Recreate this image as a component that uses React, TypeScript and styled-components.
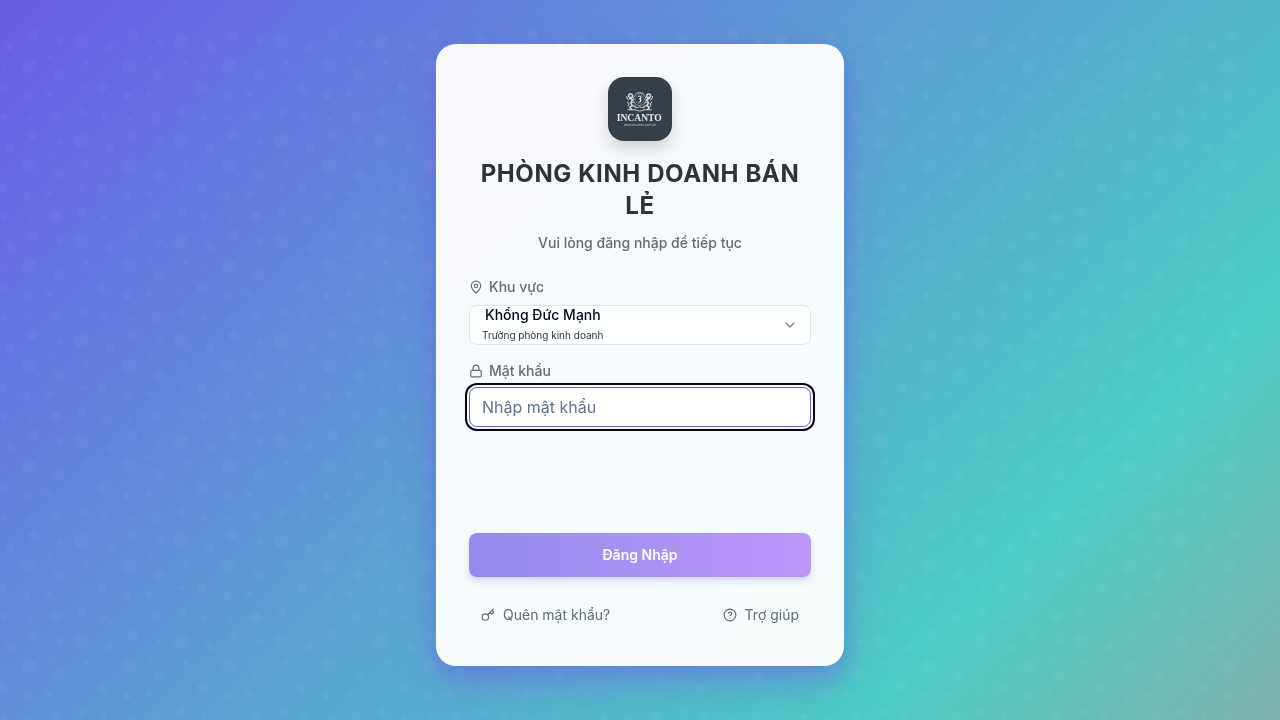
import React from "react";
import styled, { createGlobalStyle } from "styled-components";
import { ChevronDown, CircleHelp, Key, Lock, MapPin } from "lucide-react";

const GlobalStyle = createGlobalStyle`
  *, *::before, *::after { box-sizing: border-box; }
  html, body { margin: 0; padding: 0; height: 100%; overflow: hidden; }
  body { font-family: Inter, "Noto Sans", sans-serif; color: #020817; }
  button, input { font-family: inherit; }
`;

const Page = styled.div`
  position: relative;
  display: flex;
  align-items: center;
  justify-content: center;
  width: 100%;
  height: 100vh;
  padding-bottom: 10px;
  overflow: hidden;
  background: linear-gradient(135deg, #6c5ce7 0%, #4ecdc4 78.6%, #ff6b6b 157.2%);
`;

const Bubbles = styled.svg`
  position: absolute;
  inset: 0;
  width: 100%;
  height: 100%;
  transform: translate(-30px, 30px);
`;

const Card = styled.main`
  position: relative;
  width: 408px;
  height: 622px;
  padding: 32px;
  display: flex;
  flex-direction: column;
  border: 1px solid rgba(255, 255, 255, 0.2);
  border-radius: 20px;
  background: rgba(255, 255, 255, 0.95);
  backdrop-filter: blur(20px);
  box-shadow: 0 20px 40px rgba(108, 92, 231, 0.4), 0 8px 16px rgba(108, 92, 231, 0.3);
`;

const Header = styled.header`
  display: flex;
  flex-direction: column;
  align-items: center;
  text-align: center;
`;

const Logo = styled.div`
  width: 64px;
  height: 64px;
  border-radius: 16px;
  overflow: hidden;
  background: #353f48;
  box-shadow: 0 8px 16px rgba(0, 0, 0, 0.15);
  svg { display: block; }
`;

const Title = styled.h1`
  margin: 17px 0 0;
  font-size: 24px;
  line-height: 32px;
  font-weight: 700;
  letter-spacing: 0.6px;
  color: #2d3436;
`;

const Subtitle = styled.p`
  margin: 11px 0 0;
  font-size: 14px;
  line-height: 20px;
  font-weight: 500;
  color: #636e72;
`;

const Form = styled.form`
  display: flex;
  flex-direction: column;
  margin-top: 24px;
`;

const Field = styled.div<{ $spaced?: boolean }>`
  display: flex;
  flex-direction: column;
  margin-top: ${(p) => (p.$spaced ? 16 : 0)}px;
`;

const Label = styled.label<{ $gap: number }>`
  display: flex;
  align-items: center;
  gap: 6px;
  height: 20px;
  line-height: 20px;
  margin-bottom: ${(p) => p.$gap}px;
  font-size: 14px;
  font-weight: 500;
  color: #636e72;
`;

const Select = styled.button`
  display: flex;
  align-items: center;
  justify-content: space-between;
  height: 40px;
  padding: 0 12px;
  border: 1px solid #dfe6e9;
  border-radius: 8px;
  background: rgba(255, 255, 255, 0.9);
  color: #020817;
  text-align: left;
  svg { opacity: 0.5; }
`;

const Person = styled.span`
  display: flex;
  flex-direction: column;
`;

const PersonName = styled.span`
  padding-left: 3px;
  font-size: 14px;
  line-height: 20px;
  font-weight: 500;
`;

const PersonRole = styled.span`
  font-size: 10px;
  line-height: 20px;
  color: #2d3436;
`;

const Input = styled.input`
  height: 40px;
  padding: 0 12px;
  border: 1px solid #6c5ce7;
  border-radius: 8px;
  outline: none;
  background: #fff;
  font-size: 16px;
  box-shadow: 0 0 0 2px #fff, 0 0 0 4px #020817;
  &::placeholder { color: #64748b; opacity: 1; }
`;

const Submit = styled.button`
  height: 44px;
  margin-top: 106px;
  border: 0;
  border-radius: 8px;
  background: linear-gradient(90deg, #6c5ce7, #a66cfa);
  box-shadow: 0 4px 6px rgba(108, 92, 231, 0.3);
  color: #fff;
  font-size: 14px;
  line-height: 20px;
  font-weight: 600;
  opacity: 0.7;
`;

const Links = styled.nav`
  display: flex;
  justify-content: space-between;
  margin-top: 20px;
`;

const LinkButton = styled.button`
  display: flex;
  align-items: center;
  gap: 8px;
  height: 36px;
  padding: 0 12px;
  border: 0;
  background: transparent;
  font-size: 14px;
  line-height: 20px;
  color: #636e72;
`;

const bubbles = [
  [11, 11, 7], [59, 36, 7],
  [16, 33, 3], [79, 64, 3], [34, 87, 3], [90, 11, 3],
  [12, 82, 4], [40, 17, 4], [63, 5, 5], [57, 66, 4],
  [86, 87, 5], [32, 58, 5], [89, 45, 5],
  [80, 27, 2], [60, 89, 2], [35, 39, 2], [12, 58, 2],
];

function BubblePattern() {
  return (
    <Bubbles aria-hidden="true">
      <defs>
        <pattern id="bubbles" width="100" height="100" patternUnits="userSpaceOnUse">
          {bubbles.map(([x, y, r]) => (
            <circle key={`${x}-${y}`} cx={x} cy={y} r={r} fill="#fff" fillOpacity="0.037" />
          ))}
        </pattern>
      </defs>
      <rect width="100%" height="100%" fill="url(#bubbles)" />
    </Bubbles>
  );
}

function Lion() {
  return (
    <g fill="none" stroke="#cfd5d9" strokeLinecap="round" strokeLinejoin="round">
      <path d="M22 17c-1.6.6-1.8 2.2-.6 3.2l2.4.4c1.2-.8 1-3-.4-3.6zM21.6 21.4l2.8 1.4-1.6 3 1.4 2.6-2.4 2 1.6 1.8" strokeWidth="1.6" />
      <path d="M18.7 19.4l.6 2.6 1.4 1.2M19.4 25.4l1.8 1.2-1 2.4M24.6 20.4l1.6 1.8M24.2 25l2 .8M24.2 29.2l2.6-.6.8 2" strokeWidth="1" />
      <path d="M20 32.7h7.4" strokeWidth="1.1" />
    </g>
  );
}

function Crest() {
  return (
    <svg width="64" height="64" viewBox="0 0 64 64" role="img">
      <Lion />
      <g transform="translate(63.2 0) scale(-1 1)"><Lion /></g>
      <g fill="none" stroke="#aab2b8">
        <circle cx="31.6" cy="22.4" r="6.2" strokeWidth="0.8" />
        <circle cx="31.6" cy="22.4" r="4.4" strokeWidth="0.6" strokeOpacity="0.6" />
        <path d="M30 19.8c1.6-1.3 3.2-.4 2.6.9l-1.4 1.2c2.3 0 2.6 3-.8 3.3M32.9 19.5l-.6 5.7" stroke="#e4e8ea" strokeWidth="1" />
        <path d="M27.4 17c2-2 6.4-2 8.4 0" strokeWidth="0.8" />
        <path d="M26 29.6l3 1.3 2.6-1.2 2.6 1.2 3-1.3M27.4 32.9c2.6 1.3 5.8 1.3 8.4 0" stroke="#c5cbd0" strokeWidth="1" />
      </g>
      <text x="31.2" y="43.8" textAnchor="middle" textLength="45" lengthAdjust="spacingAndGlyphs" fontFamily="Liberation Serif, serif" fontWeight="700" fontSize="10.2" fill="#e6e9eb">INCANTO</text>
      <circle cx="54.2" cy="37.4" r="0.5" fill="#9ea6ac" />
      <text x="32" y="48.9" textAnchor="middle" textLength="32" lengthAdjust="spacingAndGlyphs" fontFamily="Liberation Sans, sans-serif" fontSize="3.6" fill="#c5cbd0">www.incanto.com.vn</text>
    </svg>
  );
}

export default function App() {
  return (
    <>
      <GlobalStyle />
      <Page>
        <BubblePattern />
        <Card>
          <Header>
            <Logo><Crest /></Logo>
            <Title>PHÒNG KINH DOANH BÁN LẺ</Title>
            <Subtitle>Vui lòng đăng nhập để tiếp tục</Subtitle>
          </Header>
          <Form>
            <Field>
              <Label $gap={8}><MapPin size={14} />Khu vực</Label>
              <Select type="button">
                <Person>
                  <PersonName>Khổng Đức Mạnh</PersonName>
                  <PersonRole>Trưởng phòng kinh doanh</PersonRole>
                </Person>
                <ChevronDown size={16} />
              </Select>
            </Field>
            <Field $spaced>
              <Label $gap={6} htmlFor="password"><Lock size={14} />Mật khẩu</Label>
              <Input id="password" type="password" placeholder="Nhập mật khẩu" />
            </Field>
            <Submit type="button">Đăng Nhập</Submit>
          </Form>
          <Links>
            <LinkButton><Key size={14} />Quên mật khẩu?</LinkButton>
            <LinkButton><CircleHelp size={14} />Trợ giúp</LinkButton>
          </Links>
        </Card>
      </Page>
    </>
  );
}
